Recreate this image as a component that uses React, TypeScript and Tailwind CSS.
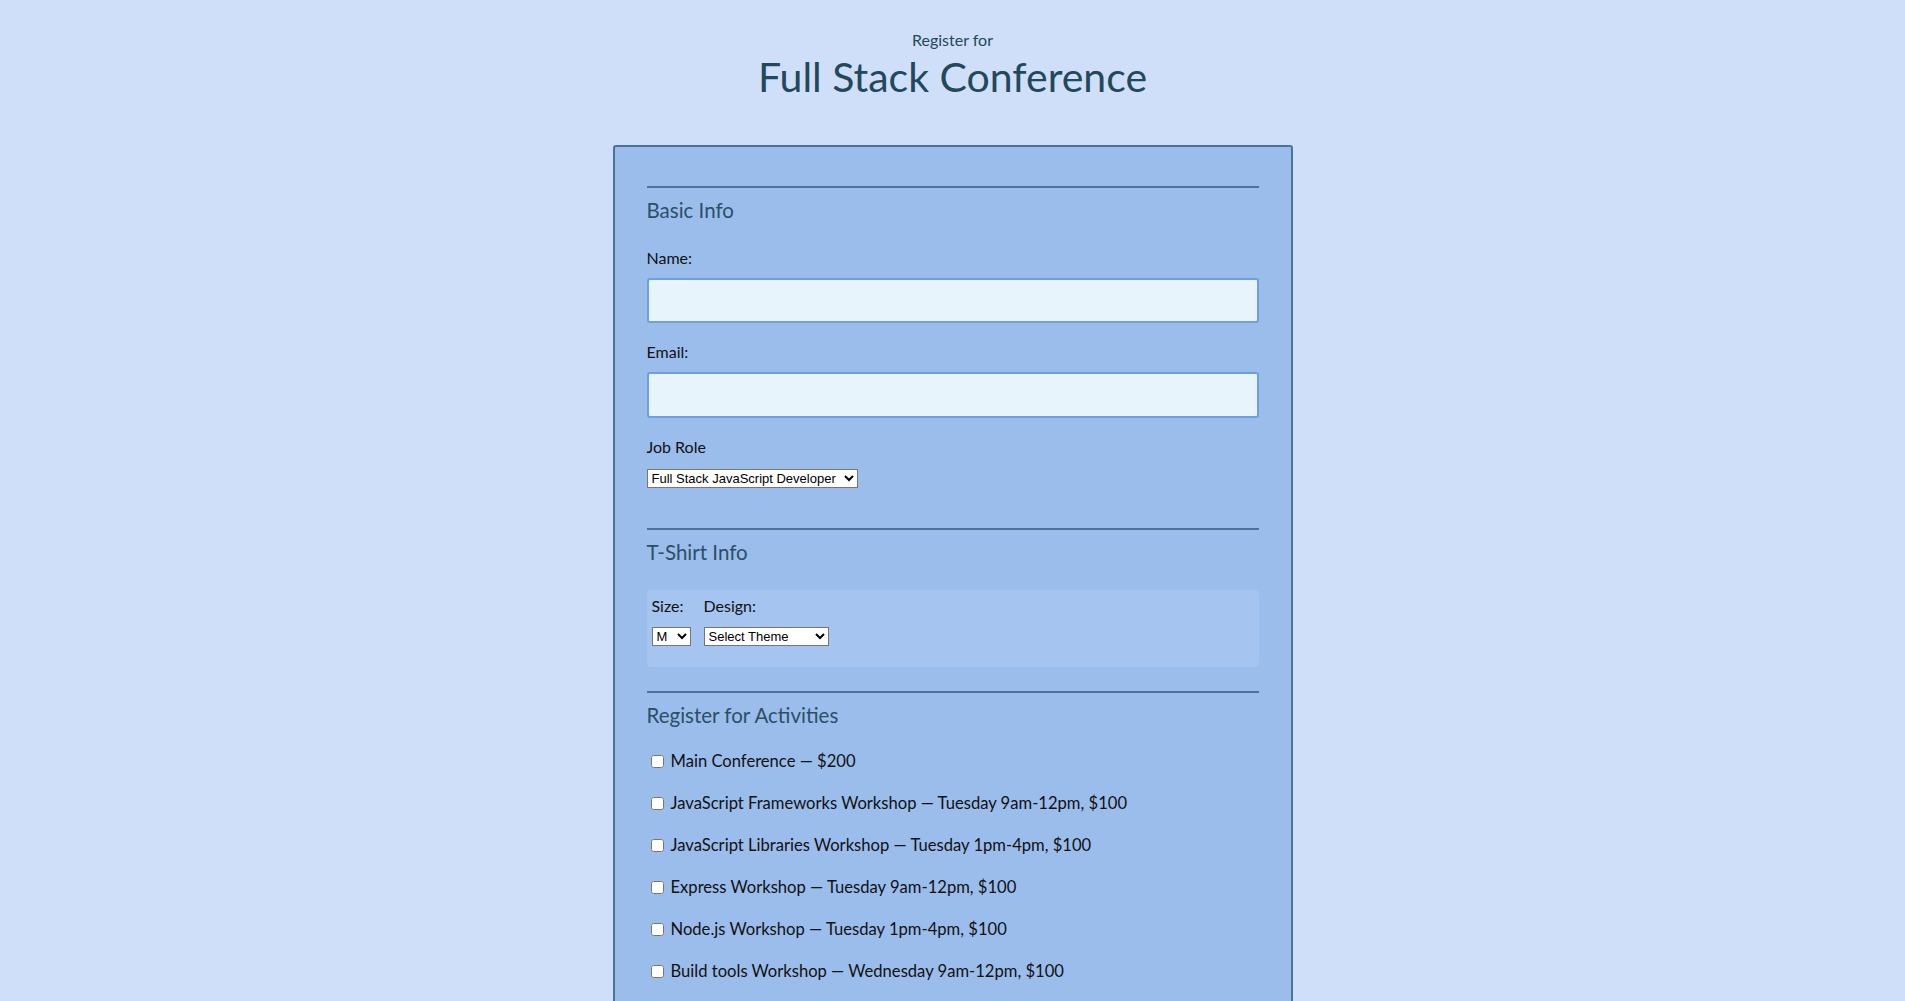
import { useState } from 'react';

const activities = [
  'Main Conference — $200',
  'JavaScript Frameworks Workshop — Tuesday 9am-12pm, $100',
  'JavaScript Libraries Workshop — Tuesday 1pm-4pm, $100',
  'Express Workshop — Tuesday 9am-12pm, $100',
  'Node.js Workshop — Tuesday 1pm-4pm, $100',
  'Build tools Workshop — Wednesday 9am-12pm, $100',
];

const Legend = ({ children }: { children: React.ReactNode }) => (
  <div className="border-t-2 border-[#4a7397] pt-[8px]">
    <h2 className="text-[20.5px] leading-[28px] text-[#2c4f66]">{children}</h2>
  </div>
);

const App = () => {
  const [checked, setChecked] = useState<boolean[]>(activities.map(() => false));

  return (
    <div
      className="min-h-screen bg-[#cfdffa] text-[#111] pb-16"
      style={{ fontFamily: 'Lato, "Noto Sans", sans-serif' }}
    >
      <header className="pt-[28px] text-center text-[#22485b]">
        <p className="text-[16px] leading-[24px]">Register for</p>
        <h1 className="text-[41px] leading-[50px]">Full Stack Conference</h1>
      </header>

      <form className="mx-auto mt-[43px] w-[680px] rounded-[3px] border-2 border-[#4a7397] bg-[#9bbdec] px-8 pt-[39px] pb-24">
        <Legend>Basic Info</Legend>

        <label className="mt-[22px] block text-[16px] leading-[24px]">Name:</label>
        <input
          type="text"
          className="mt-[8px] block h-[45px] w-full rounded-[3px] border-2 border-[#6e9fe0] bg-[#e8f4fb] px-2 outline-none"
        />

        <label className="mt-[17px] block text-[16px] leading-[24px]">Email:</label>
        <input
          type="email"
          className="mt-[8px] block h-[46px] w-full rounded-[3px] border-2 border-[#6e9fe0] bg-[#e8f4fb] px-2 outline-none"
        />

        <label className="mt-[17px] block text-[16px] leading-[24px]">Job Role</label>
        <select
          defaultValue="fs"
          className="mt-[10px] block h-[19px] w-[211px] border border-[#767676] bg-white text-[13px] text-black"
          style={{ fontFamily: '"Liberation Sans", Arial, sans-serif' }}
        >
          <option value="fs">Full Stack JavaScript Developer</option>
          <option value="fe">Front End Developer</option>
          <option value="be">Back End Developer</option>
          <option value="other">Other</option>
        </select>

        <div className="mt-[40px]">
          <Legend>T-Shirt Info</Legend>
        </div>

        <div className="mt-[24px] flex h-[77px] gap-[13px] rounded-[4px] bg-[#a5c4ef] pl-[5px] pt-[4px]">
          <div className="flex flex-col">
            <label className="text-[16px] leading-[24px]">Size:</label>
            <select
              defaultValue="M"
              className="mt-[9px] h-[19px] w-[39px] border border-[#767676] bg-white text-[13px] text-black"
              style={{ fontFamily: '"Liberation Sans", Arial, sans-serif' }}
            >
              <option>S</option>
              <option>M</option>
              <option>L</option>
              <option>XL</option>
            </select>
          </div>
          <div className="flex flex-col">
            <label className="text-[16px] leading-[24px]">Design:</label>
            <select
              defaultValue="select"
              className="mt-[9px] h-[19px] w-[125px] border border-[#767676] bg-white text-[13px] text-black"
              style={{ fontFamily: '"Liberation Sans", Arial, sans-serif' }}
            >
              <option value="select">Select Theme</option>
              <option value="js">JS Puns</option>
              <option value="heart">I ♥ JS</option>
            </select>
          </div>
        </div>

        <div className="mt-[24px]">
          <Legend>Register for Activities</Legend>
        </div>

        <div className="mt-[20px] flex flex-col gap-[18px]">
          {activities.map((a, i) => (
            <label key={a} className="flex items-center text-[16.6px] leading-[24px]">
              <input
                type="checkbox"
                checked={checked[i]}
                onChange={() =>
                  setChecked((c) => c.map((v, j) => (j === i ? !v : v)))
                }
                className="ml-[4px] mr-[7px] h-[13px] w-[13px]"
              />
              {a}
            </label>
          ))}
        </div>
      </form>
    </div>
  );
};

export default App;
